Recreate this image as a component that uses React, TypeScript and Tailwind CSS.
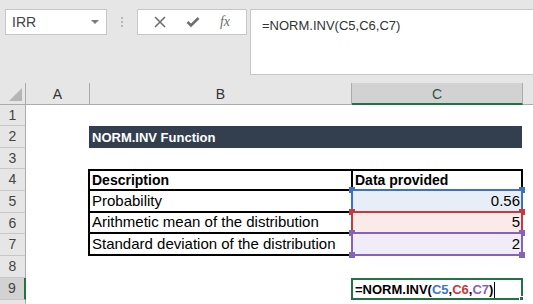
import React from "react";

const rowHeights = [21, 22, 21, 22, 22, 21, 22, 22, 22, 10];

function Handle({ className }: { className: string }) {
  return <span className={`absolute w-[6px] h-[6px] ${className}`} />;
}

function RowHeader({ n, selected }: { n?: number; selected?: boolean }) {
  return (
    <div
      className={`w-[26px] shrink-0 flex items-center justify-center text-[14px] text-[#444] border-b border-[#c6c6c6] ${
        selected
          ? "bg-[#d2d2d2] border-r-2 border-r-[#217346]"
          : "bg-[#e6e6e6] border-r border-r-[#ababab]"
      }`}
    >
      {n}
    </div>
  );
}

export default function App() {
  return (
    <div className="w-[533px] h-[304px] overflow-hidden bg-white font-['Liberation_Sans',sans-serif] text-[#222]">
      {/* Formula bar */}
      <div className="h-[83px] bg-[#e6e6e6] flex items-start pt-[9px] pl-[5px]">
        <div className="w-[102px] h-[26px] bg-white border border-[#c6c6c6] flex items-center justify-between pl-[6px] pr-[7px]">
          <span className="text-[14px] text-[#444]">IRR</span>
          <svg width="8" height="4" viewBox="0 0 8 4">
            <polygon points="0,0 8,0 4,4" fill="#7a7a7a" />
          </svg>
        </div>
        <div className="w-[30px] h-[26px] flex flex-col items-center justify-center gap-[2px]">
          <span className="w-[2px] h-[2px] bg-[#b8b8b8]" />
          <span className="w-[2px] h-[2px] bg-[#b8b8b8]" />
          <span className="w-[2px] h-[2px] bg-[#b8b8b8]" />
        </div>
        <div className="w-[110px] h-[26px] bg-white border border-[#c6c6c6] flex items-center justify-around px-[6px]">
          <svg width="12" height="12" viewBox="0 0 12 12">
            <path d="M1 1 L11 11 M11 1 L1 11" stroke="#6e6e6e" strokeWidth="1.6" />
          </svg>
          <svg width="14" height="12" viewBox="0 0 14 12">
            <path d="M1.5 6 L5 9.5 L12.5 2" stroke="#6e6e6e" strokeWidth="2.6" fill="none" />
          </svg>
          <span className="font-['Liberation_Serif',serif] italic text-[14px] text-[#6e6e6e] leading-none">
            fx
          </span>
        </div>
        <div className="ml-[3px] flex-1 h-[66px] bg-white border border-r-0 border-[#c6c6c6] pl-[11px] pt-[3px]">
          <span className="text-[13px] text-[#333]">=NORM.INV(C5,C6,C7)</span>
        </div>
      </div>

      {/* Column headers */}
      <div className="flex h-[22px] bg-[#e6e6e6] border-b border-[#ababab] text-[14px] text-[#333]">
        <div className="w-[26px] shrink-0 border-r border-[#ababab] flex items-end justify-end pr-[3px] pb-[3px]">
          <svg width="13" height="13" viewBox="0 0 13 13">
            <polygon points="13,0 13,13 0,13" fill="#b5b5b5" />
          </svg>
        </div>
        <div className="w-[64px] shrink-0 border-r border-[#ababab] flex items-center justify-center pt-[2px]">
          A
        </div>
        <div className="w-[262px] shrink-0 border-r border-[#ababab] flex items-center justify-center pt-[2px]">
          B
        </div>
        <div className="w-[171px] shrink-0 border-r border-[#ababab] bg-[#d2d2d2] border-b-2 border-b-[#217346] flex items-center justify-center pt-[2px] text-[#2d5446] -mb-px">
          C
        </div>
        <div className="flex-1" />
      </div>

      {/* Rows */}
      <div className="flex flex-col">
        <div className="flex" style={{ height: rowHeights[0] }}>
          <RowHeader n={1} />
        </div>

        <div className="flex" style={{ height: rowHeights[1] }}>
          <RowHeader n={2} />
          <div className="w-[63px] shrink-0" />
          <div className="w-[433px] shrink-0 bg-[#333f4f] flex items-center pl-[3px] pt-[1px]">
            <span className="text-white font-bold text-[13px]">NORM.INV Function</span>
          </div>
        </div>

        <div className="flex" style={{ height: rowHeights[2] }}>
          <RowHeader n={3} />
        </div>

        <div className="flex" style={{ height: rowHeights[3] }}>
          <RowHeader n={4} />
          <div className="w-[62px] shrink-0" />
          <div className="w-[263px] shrink-0 border-t-2 border-l-2 border-b-2 border-black flex items-center pl-[2px] pt-[1px]">
            <span className="font-bold text-[14px] text-black">Description</span>
          </div>
          <div className="relative w-[172px] shrink-0 border-t-2 border-x-2 border-black border-b-2 border-b-[#3e71c4] flex items-center pl-[2px] pt-[1px]">
            <span className="font-bold text-[14px] text-black">Data provided</span>
            <Handle className="-left-[4px] -bottom-[4px] bg-[#3e71c4]" />
            <Handle className="-right-[4px] -bottom-[4px] bg-[#3e71c4]" />
          </div>
        </div>

        <div className="flex" style={{ height: rowHeights[4] }}>
          <RowHeader n={5} />
          <div className="w-[62px] shrink-0" />
          <div className="w-[263px] shrink-0 border-l-2 border-b-2 border-black flex items-center pl-[2px]">
            <span className="text-[15px] text-black">Probability</span>
          </div>
          <div className="relative w-[172px] shrink-0 border-x-2 border-[#3e71c4] border-b-2 border-b-[#c6393d] bg-[#e8eef8] flex items-center justify-end pr-[1px]">
            <span className="text-[15px] text-black">0.56</span>
            <Handle className="-left-[4px] -bottom-[4px] bg-[#c6393d]" />
            <Handle className="-right-[4px] -bottom-[4px] bg-[#c6393d]" />
          </div>
        </div>

        <div className="flex" style={{ height: rowHeights[5] }}>
          <RowHeader n={6} />
          <div className="w-[62px] shrink-0" />
          <div className="w-[263px] shrink-0 border-l-2 border-b-2 border-black flex items-center pl-[2px]">
            <span className="text-[15px] text-black">Arithmetic mean of the distribution</span>
          </div>
          <div className="relative w-[172px] shrink-0 border-x-2 border-[#c6393d] border-b-2 border-b-[#8762bd] bg-[#fbeaea] flex items-center justify-end pr-[1px]">
            <span className="text-[15px] text-black">5</span>
            <Handle className="-left-[4px] -bottom-[4px] bg-[#8762bd]" />
            <Handle className="-right-[4px] -bottom-[4px] bg-[#8762bd]" />
          </div>
        </div>

        <div className="flex" style={{ height: rowHeights[6] }}>
          <RowHeader n={7} />
          <div className="w-[62px] shrink-0" />
          <div className="w-[263px] shrink-0 border-l-2 border-b-2 border-black flex items-center pl-[2px]">
            <span className="text-[15px] text-black">Standard deviation of the distribution</span>
          </div>
          <div className="relative w-[172px] shrink-0 border-x-2 border-b-2 border-[#8762bd] bg-[#f1edf8] flex items-center justify-end pr-[1px]">
            <span className="text-[15px] text-black">2</span>
            <Handle className="-left-[4px] -bottom-[4px] bg-[#8762bd]" />
            <Handle className="-right-[4px] -bottom-[4px] bg-[#8762bd]" />
          </div>
        </div>

        <div className="flex" style={{ height: rowHeights[7] }}>
          <RowHeader n={8} />
        </div>

        <div className="flex" style={{ height: rowHeights[8] }}>
          <RowHeader n={9} selected />
          <div className="w-[325px] shrink-0" />
          <div className="relative w-[172px] shrink-0 border-2 border-[#217346] flex items-center pl-[2px] pt-[1px]">
            <span className="font-bold text-[13px] text-black">
              =NORM.INV(<span className="text-[#3b78c8]">C5</span>,
              <span className="text-[#c6393d]">C6</span>,
              <span className="text-[#8762bd]">C7</span>)
            </span>
            <span className="ml-[1px] w-px h-[16px] bg-black" />
            <span className="absolute -right-[3px] -bottom-[3px] w-[5px] h-[5px] bg-[#217346] border border-white" />
          </div>
        </div>

        <div className="flex" style={{ height: rowHeights[9] }}>
          <RowHeader />
        </div>
      </div>
    </div>
  );
}
